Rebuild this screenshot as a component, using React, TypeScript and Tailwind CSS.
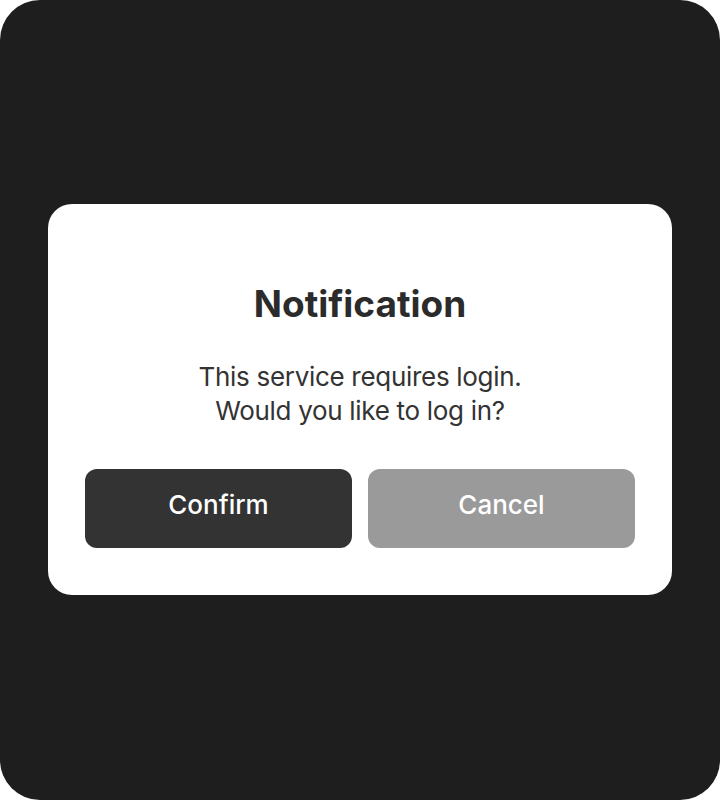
export default function App() {
  return (
    <div className="bg-white">
      <div
        className="h-[800px] w-[720px] rounded-[40px] bg-[#1e1e1f] flex items-center justify-center px-12 pb-[2px]"
        style={{ fontFamily: "Inter, 'Noto Sans', sans-serif" }}
      >
        <div className="w-full rounded-[24px] bg-white px-[37px] pt-[80px] pb-[47px] flex flex-col items-center">
          <h2 className="text-[37px] leading-[40px] font-bold text-[#2b2b2b]">Notification</h2>
          <p className="mt-[36px] text-center text-[26px] leading-[34px] text-[#333333] tracking-[-0.3px]">
            This service requires login.
            <br />
            Would you like to log in?
          </p>
          <div className="mt-[41px] grid w-full grid-cols-2 gap-4">
            <button className="h-[79px] rounded-[12px] bg-[#333333] pb-[7px] text-[26px] font-medium text-white">
              Confirm
            </button>
            <button className="h-[79px] rounded-[12px] bg-[#9a9a9a] pb-[7px] text-[26px] font-medium text-white">
              Cancel
            </button>
          </div>
        </div>
      </div>
    </div>
  );
}
